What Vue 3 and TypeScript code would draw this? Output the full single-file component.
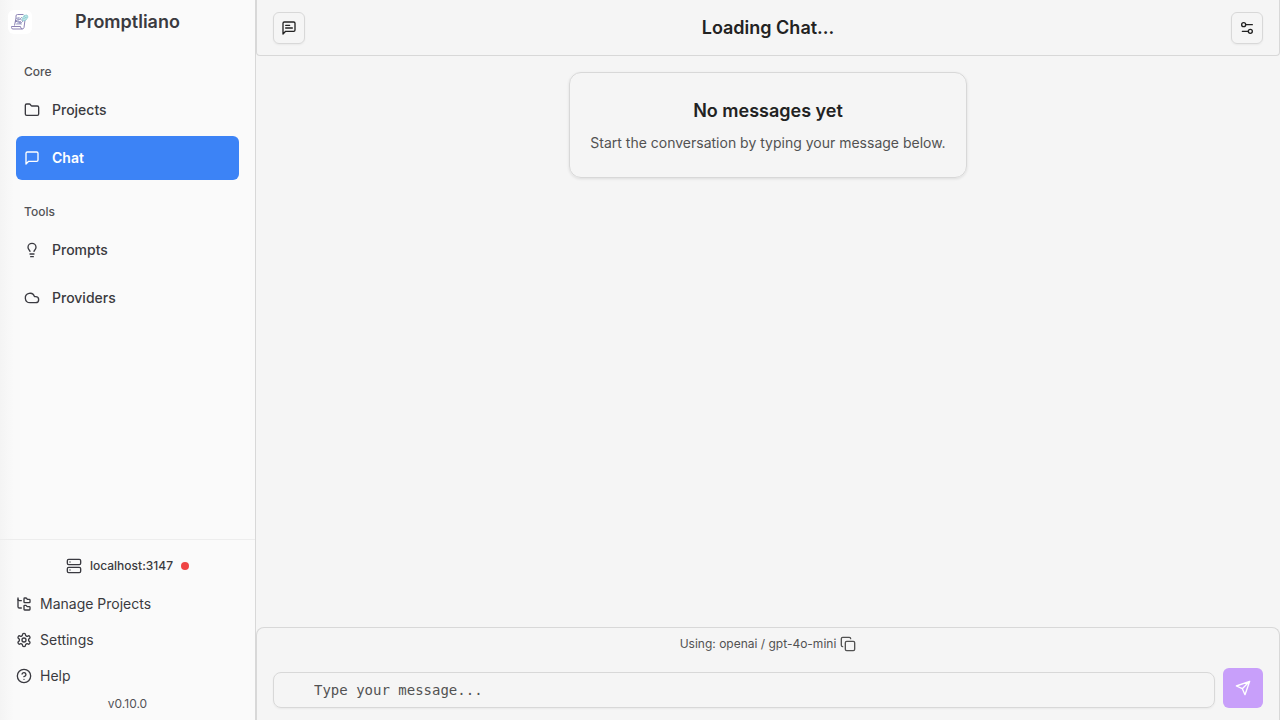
<script setup lang="ts">
import { ref } from 'vue'

interface NavItem {
  label: string
  paths: string[]
  active?: boolean
}
interface NavGroup {
  title: string
  items: NavItem[]
}

const groups: NavGroup[] = [
  {
    title: 'Core',
    items: [
      {
        label: 'Projects',
        paths: [
          'M20 20a2 2 0 0 0 2-2V8a2 2 0 0 0-2-2h-7.9a2 2 0 0 1-1.69-.9L9.6 3.9A2 2 0 0 0 7.93 3H4a2 2 0 0 0-2 2v13a2 2 0 0 0 2 2Z',
        ],
      },
      { label: 'Chat', active: true, paths: ['M21 15a2 2 0 0 1-2 2H7l-4 4V5a2 2 0 0 1 2-2h14a2 2 0 0 1 2 2z'] },
    ],
  },
  {
    title: 'Tools',
    items: [
      {
        label: 'Prompts',
        paths: [
          'M15 14c.2-1 .7-1.7 1.5-2.5 1-.9 1.5-2.2 1.5-3.5A6 6 0 0 0 6 8c0 1 .2 2.2 1.5 3.5.7.7 1.3 1.5 1.5 2.5',
          'M9 18h6',
          'M10 22h4',
        ],
      },
      { label: 'Providers', paths: ['M17.5 19H9a7 7 0 1 1 6.71-9h1.79a4.5 4.5 0 1 1 0 9Z'] },
    ],
  },
]

const footerItems: NavItem[] = [
  {
    label: 'Manage Projects',
    paths: [
      'M20 10a1 1 0 0 0 1-1V6a1 1 0 0 0-1-1h-2.5a1 1 0 0 1-.8-.4l-.9-1.2A1 1 0 0 0 15 3h-2a1 1 0 0 0-1 1v5a1 1 0 0 0 1 1Z',
      'M20 21a1 1 0 0 0 1-1v-3a1 1 0 0 0-1-1h-2.9a1 1 0 0 1-.88-.55l-.42-.85a1 1 0 0 0-.92-.6H13a1 1 0 0 0-1 1v5a1 1 0 0 0 1 1Z',
      'M3 5a2 2 0 0 0 2 2h3',
      'M3 3v13a2 2 0 0 0 2 2h3',
    ],
  },
  {
    label: 'Settings',
    paths: [
      'M12.22 2h-.44a2 2 0 0 0-2 2v.18a2 2 0 0 1-1 1.73l-.43.25a2 2 0 0 1-2 0l-.15-.08a2 2 0 0 0-2.73.73l-.22.38a2 2 0 0 0 .73 2.73l.15.1a2 2 0 0 1 1 1.72v.51a2 2 0 0 1-1 1.74l-.15.09a2 2 0 0 0-.73 2.73l.22.38a2 2 0 0 0 2.73.73l.15-.08a2 2 0 0 1 2 0l.43.25a2 2 0 0 1 1 1.73V20a2 2 0 0 0 2 2h.44a2 2 0 0 0 2-2v-.18a2 2 0 0 1 1-1.73l.43-.25a2 2 0 0 1 2 0l.15.08a2 2 0 0 0 2.73-.73l.22-.39a2 2 0 0 0-.73-2.73l-.15-.08a2 2 0 0 1-1-1.74v-.5a2 2 0 0 1 1-1.74l.15-.09a2 2 0 0 0 .73-2.73l-.22-.38a2 2 0 0 0-2.73-.73l-.15.08a2 2 0 0 1-2 0l-.43-.25a2 2 0 0 1-1-1.73V4a2 2 0 0 0-2-2z',
      'M15 12a3 3 0 1 1-6 0a3 3 0 1 1 6 0',
    ],
  },
  {
    label: 'Help',
    paths: [
      'M22 12a10 10 0 1 1-20 0a10 10 0 1 1 20 0',
      'M9.09 9a3 3 0 0 1 5.83 1c0 2-3 3-3 3',
      'M12 17h.01',
    ],
  },
]

const message = ref('')
</script>

<template>
  <div class="app">
    <aside class="sidebar">
      <div class="brand">
        <svg class="logo" viewBox="0 0 24 24" fill="none" aria-hidden="true">
          <rect width="24" height="24" rx="6" fill="#fff" />
          <path d="M8 6q0-1.500 1.500-1.500h6M8 6v2l-1.500 7.500M17 10l-1 7.500q-.3 1.500-2 1.500H5q-1.500 0-1.500-1.500v-1h9q.2 2.500 1.800 2.500" stroke="#8d83b4" stroke-width="1" />
          <path d="M8 8l3 2 3-3M7 12l3-1 2 3 3-3M10 7v7M8 14h6M12 9l3 2" stroke="#8f91bd" stroke-width=".8" />
          <circle cx="8" cy="11" r="1" fill="#807aac" /><circle cx="12" cy="12" r="1" fill="#8b87b9" />
          <circle cx="11" cy="8" r=".8" fill="#969bc5" />
          <path d="M14 9l2-3.500 3-.5 1 2-2 3-3 1zM16 6l2 2M15 9l4-2" fill="#c3e7e8" stroke="#8bcbd0" stroke-width=".8" />
        </svg>
        <span class="brand-name">Promptliano</span>
      </div>

      <nav class="nav">
        <section v-for="group in groups" :key="group.title" class="group">
          <h2 class="group-title">{{ group.title }}</h2>
          <a v-for="item in group.items" :key="item.label" href="#" class="nav-item" :class="{ active: item.active }">
            <svg class="icon" viewBox="0 0 24 24" aria-hidden="true"><path v-for="d in item.paths" :key="d" :d="d" /></svg>
            <span>{{ item.label }}</span>
          </a>
        </section>
      </nav>

      <div class="side-footer">
        <button class="server" type="button">
          <svg class="icon" viewBox="0 0 24 24" aria-hidden="true">
            <rect x="2" y="2" width="20" height="8" rx="2" /><rect x="2" y="14" width="20" height="8" rx="2" />
            <path d="M6 6h.01M6 18h.01" />
          </svg>
          <span>localhost:3147</span>
          <i class="dot"></i>
        </button>
        <button v-for="item in footerItems" :key="item.label" type="button" class="footer-item">
          <svg class="icon" viewBox="0 0 24 24" aria-hidden="true"><path v-for="d in item.paths" :key="d" :d="d" /></svg>
          <span>{{ item.label }}</span>
        </button>
        <div class="version">v0.10.0</div>
      </div>
    </aside>

    <main class="main">
      <header class="topbar">
        <button class="square" type="button" aria-label="Chats">
          <svg class="icon" viewBox="0 0 24 24" aria-hidden="true">
            <path d="M21 15a2 2 0 0 1-2 2H7l-4 4V5a2 2 0 0 1 2-2h14a2 2 0 0 1 2 2zM13 8H7M17 12H7" />
          </svg>
        </button>
        <h1>Loading Chat...</h1>
        <button class="square" type="button" aria-label="Chat settings">
          <svg class="icon" viewBox="0 0 24 24" aria-hidden="true">
            <path d="M20 7h-9M14 17H5" /><circle cx="17" cy="17" r="3" /><circle cx="7" cy="7" r="3" />
          </svg>
        </button>
      </header>

      <div class="messages">
        <div class="empty">
          <h3>No messages yet</h3>
          <p>Start the conversation by typing your message below.</p>
        </div>
      </div>

      <footer class="composer">
        <div class="model">
          <span>Using: openai / gpt-4o-mini</span>
          <button class="copy" type="button" aria-label="Copy model name">
            <svg class="icon" viewBox="0 0 24 24" aria-hidden="true">
              <rect x="8" y="8" width="14" height="14" rx="2" /><path d="M4 16c-1.100 0-2-.9-2-2V4c0-1.100.9-2 2-2h10c1.100 0 2 .9 2 2" />
            </svg>
          </button>
        </div>
        <form class="entry" @submit.prevent>
          <input v-model="message" type="text" placeholder="Type your message..." aria-label="Message" />
          <button class="send" type="submit" aria-label="Send message" disabled>
            <svg class="icon" viewBox="0 0 24 24" aria-hidden="true">
              <path d="M22 2L15 22l-4-9-9-4ZM22 2L11 13" />
            </svg>
          </button>
        </form>
      </footer>
    </main>
  </div>
</template>

<style>
body {
  margin: 0;
}
</style>

<style scoped>
.app {
  display: flex;
  height: 100vh;
  font-family: Inter, 'Liberation Sans', sans-serif;
  font-size: 14px;
  line-height: 20px;
  color: #222;
  background: #f5f5f5;
}
.app * {
  box-sizing: border-box;
}
button {
  font: inherit;
  color: inherit;
  background: none;
  border: 0;
  padding: 0;
}
h1, h2, h3, p {
  margin: 0;
}
.icon {
  width: 16px;
  height: 16px;
  flex: none;
  display: block;
  fill: none;
  stroke: currentColor;
  stroke-width: 2;
  stroke-linecap: round;
  stroke-linejoin: round;
}
.sidebar {
  flex: none;
  display: flex;
  flex-direction: column;
  width: 256px;
  color: #3a3a40;
  background: linear-gradient(to right, #f4f4f4, #fafafa 14px);
  border-right: 1px solid #d8d8d8;
}
.brand {
  display: grid;
  grid-template-columns: 24px 1fr 24px;
  align-items: center;
  height: 44px;
  padding: 0 8px;
}
.logo {
  width: 24px;
  height: 24px;
}
.brand-name {
  font-size: 18px;
  line-height: 28px;
  font-weight: 600;
  text-align: center;
}
.nav {
  flex: 1;
  padding: 4px 16px;
}
.group {
  padding: 8px 0;
}
.group-title {
  height: 32px;
  padding: 0 8px;
  font-size: 12px;
  line-height: 32px;
  font-weight: 500;
  color: #525256;
}
.nav-item {
  display: flex;
  align-items: center;
  gap: 12px;
  height: 44px;
  padding: 0 8px;
  border-radius: 6px;
  color: inherit;
  font-weight: 500;
  text-decoration: none;
}
.nav-item + .nav-item {
  margin-top: 4px;
}
.nav-item.active {
  color: #fff;
  font-weight: 600;
  background: #3c83f6;
}
.side-footer {
  display: flex;
  flex-direction: column;
  padding: 8px 8px 6px;
  border-top: 1px solid #ededed;
}
.server {
  display: flex;
  align-items: center;
  justify-content: center;
  gap: 8px;
  height: 36px;
  margin-bottom: 2px;
  font-size: 12px;
  font-weight: 500;
}
.dot {
  width: 8px;
  height: 8px;
  border-radius: 50%;
  background: #ef4444;
}
.footer-item {
  display: flex;
  align-items: center;
  gap: 8px;
  height: 36px;
  padding: 0 8px;
}
.version {
  font-size: 12px;
  line-height: 20px;
  text-align: center;
  color: #525256;
}
.main {
  flex: 1;
  min-width: 0;
  display: flex;
  flex-direction: column;
}
.topbar {
  display: flex;
  align-items: center;
  justify-content: space-between;
  height: 56px;
  padding: 0 16px;
  border: 1px solid #d8d8d8;
  border-top: 0;
  border-radius: 0 0 4px 4px;
}
h1 {
  font-size: 18px;
  line-height: 28px;
  font-weight: 600;
}
.square {
  display: grid;
  place-items: center;
  width: 32px;
  height: 32px;
  border: 1px solid #d8d8d8;
  border-radius: 6px;
  box-shadow: 0 1px 2px rgb(0 0 0 / 5%);
}
.messages {
  flex: 1;
  display: flex;
  align-items: flex-start;
  justify-content: center;
  padding: 16px;
}
.empty {
  padding: 24px 20px;
  text-align: center;
  border: 1px solid #d8d8d8;
  border-radius: 12px;
  box-shadow: 0 1px 3px rgb(0 0 0 / 10%);
}
h3 {
  margin-bottom: 8px;
  font-size: 18px;
  line-height: 28px;
  font-weight: 600;
}
.empty p {
  color: #525252;
}
.composer {
  padding: 0 16px 12px;
  border: 1px solid #d8d8d8;
  border-bottom: 0;
  border-radius: 8px 8px 0 0;
}
.model {
  display: flex;
  align-items: center;
  justify-content: center;
  gap: 4px;
  height: 32px;
  font-size: 12px;
  color: #525252;
}
.entry {
  display: flex;
  align-items: flex-end;
  gap: 8px;
  padding-top: 8px;
}
input {
  flex: 1;
  min-width: 0;
  height: 36px;
  padding: 0 40px;
  font-family: 'DejaVu Sans Mono', monospace;
  font-size: 14px;
  color: #222;
  background: transparent;
  border: 1px solid #d8d8d8;
  border-radius: 8px;
  box-shadow: 0 1px 2px rgb(0 0 0 / 5%);
}
input::placeholder {
  color: #525252;
  opacity: 1;
}
.send {
  display: grid;
  place-items: center;
  width: 40px;
  height: 40px;
  border-radius: 6px;
  color: #fff;
  background: #c89ffa;
}
</style>
